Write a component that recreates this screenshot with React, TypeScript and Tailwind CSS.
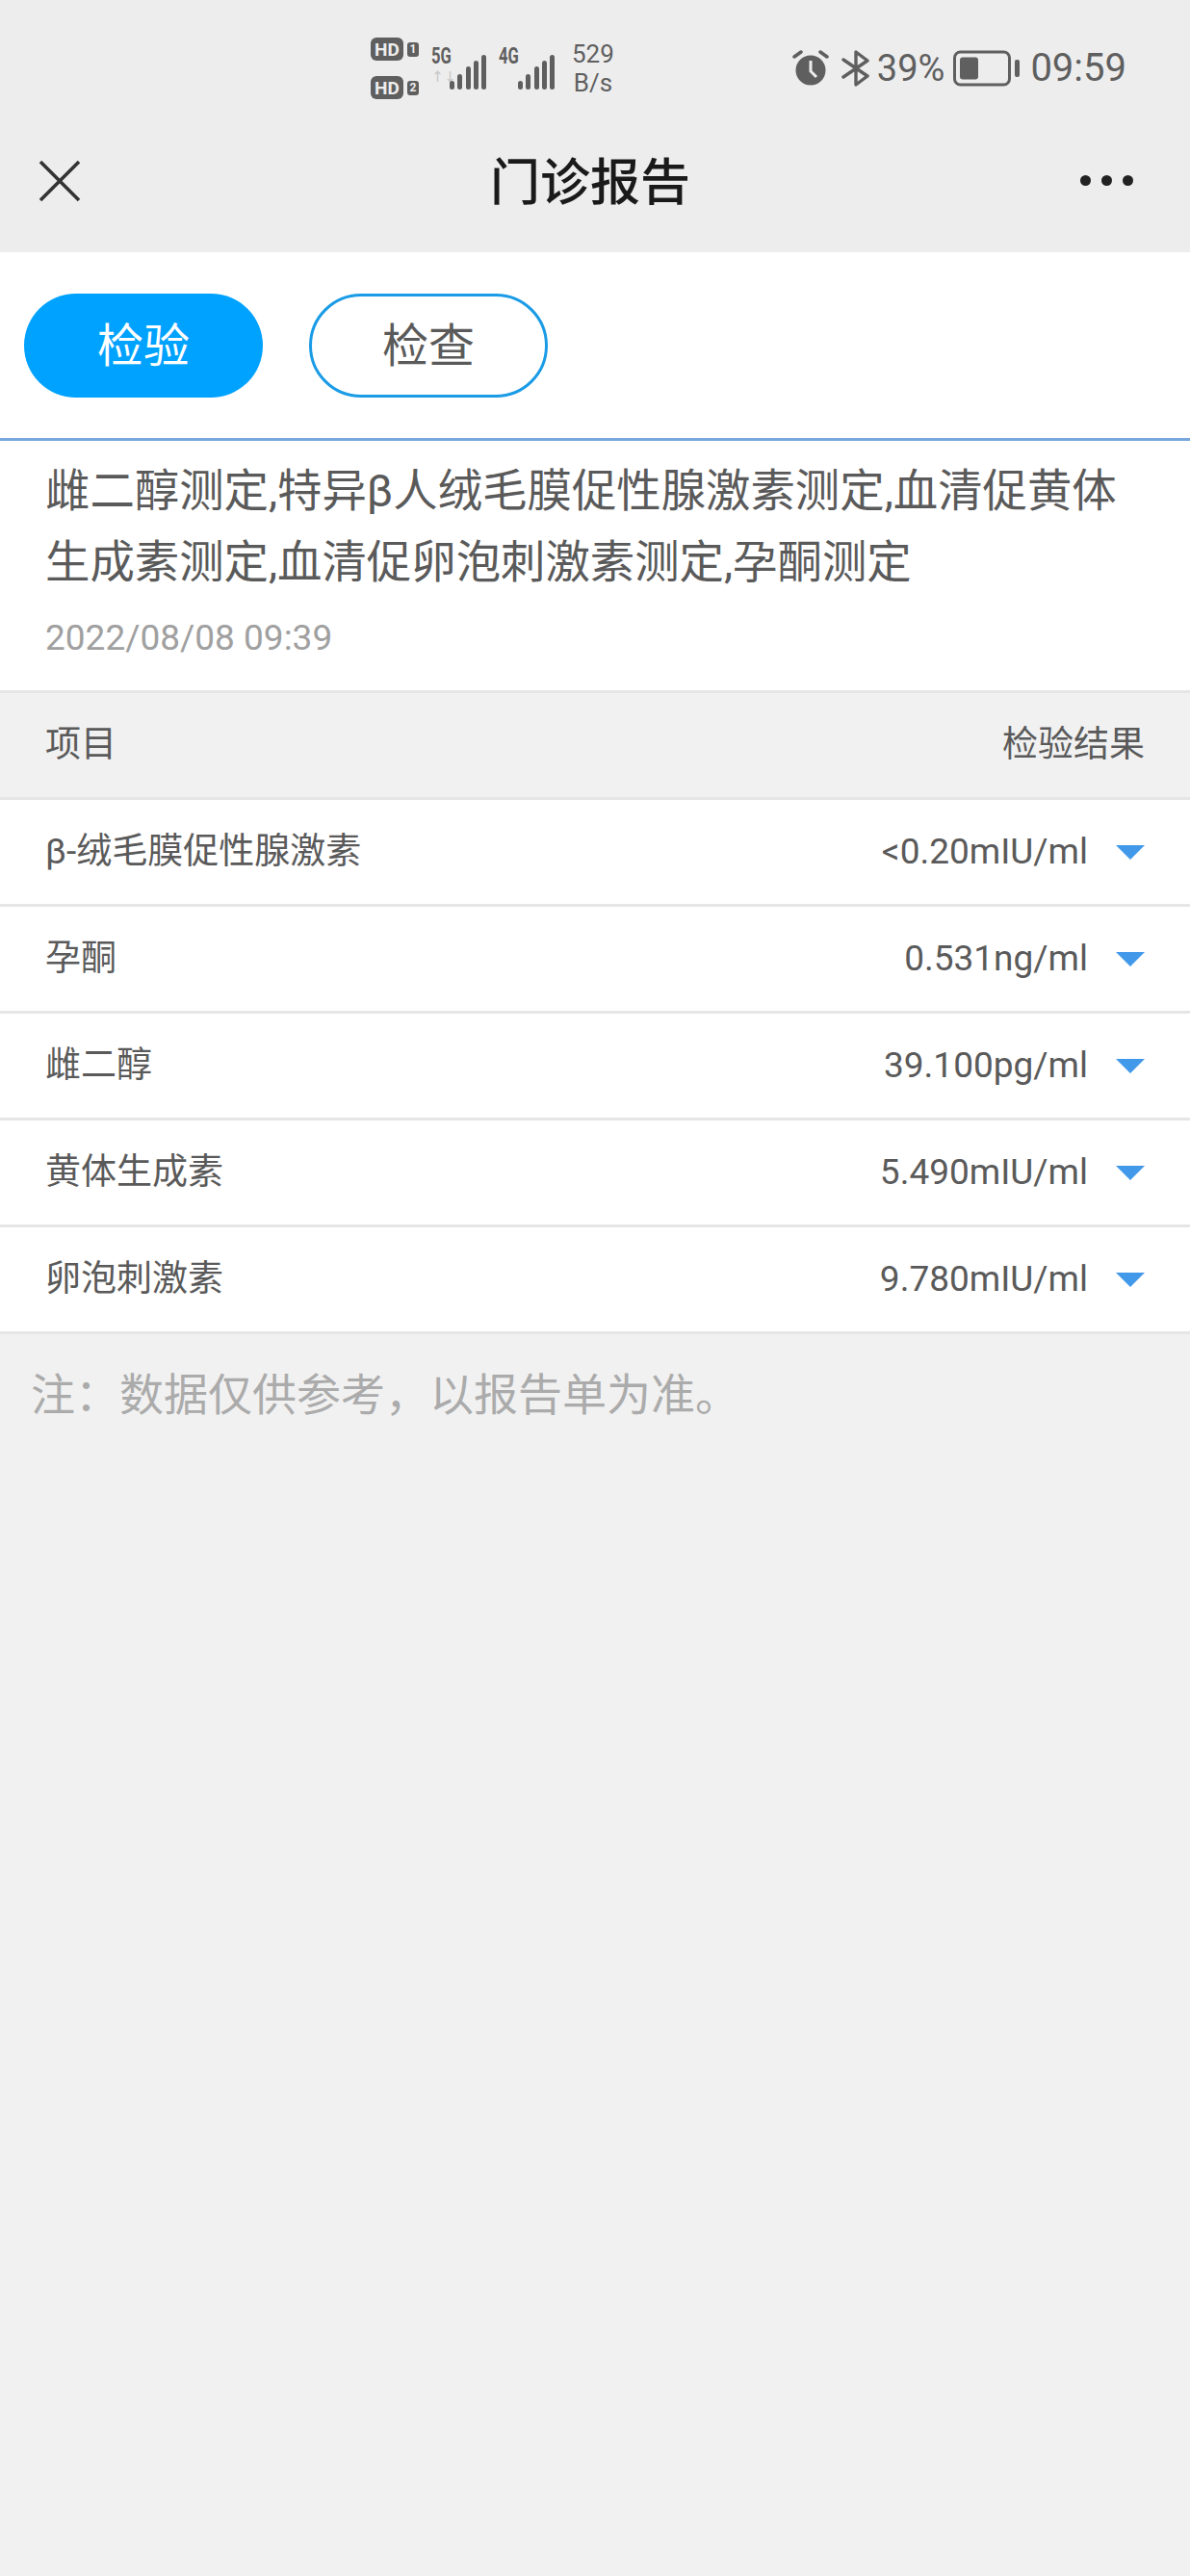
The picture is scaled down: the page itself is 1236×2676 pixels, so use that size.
function Bars() {
  return (
    <svg width="38" height="36" viewBox="0 0 38 36" fill="#5f5f5f">
      <rect x="0" y="27" width="5" height="9" rx="2.5" />
      <rect x="8" y="20" width="5" height="16" rx="2.5" />
      <rect x="17" y="12" width="5" height="24" rx="2.5" />
      <rect x="25" y="6" width="5" height="30" rx="2.5" />
      <rect x="33" y="0" width="5" height="36" rx="2.5" />
    </svg>
  );
}

function HD({ n }: { n: string }) {
  return (
    <div className="flex h-[24px] items-center gap-[4px]">
      <span className="flex h-[24px] w-[34px] items-center justify-center rounded-[6px] bg-[#5f5f5f] text-[19px] font-bold leading-none text-[#ededed]">HD</span>
      <span className="flex h-[15px] w-[12px] items-center justify-center rounded-[3px] bg-[#5f5f5f] text-[12px] font-bold leading-none text-[#ededed]">{n}</span>
    </div>
  );
}

const rows = [
  ["β-绒毛膜促性腺激素", "<0.20mIU/ml"],
  ["孕酮", "0.531ng/ml"],
  ["雌二醇", "39.100pg/ml"],
  ["黄体生成素", "5.490mIU/ml"],
  ["卵泡刺激素", "9.780mIU/ml"],
];

export default function App() {
  return (
    <div className='min-h-[2676px] w-[1236px] bg-[#f1f1f1] [font-family:Roboto,"Noto_Sans_CJK_SC",sans-serif] text-[#5a5a5a]'>
      <div className="h-[262px] bg-[#ededed]">
        <div className="flex h-[130px] items-start pl-[385px] pr-[66px] pt-[39px]">
          <div className="flex flex-col gap-[16px]">
            <HD n="1" />
            <HD n="2" />
          </div>
          <div className="ml-[13px] mt-[10px] flex">
            <div className="relative h-[40px] w-[57px]">
              <span className="absolute left-0 top-[-2px] origin-left text-[23px] font-bold leading-[24px] text-[#5f5f5f] [transform:scaleX(0.72)]">5G</span>
              <span className="absolute left-0 top-[24px] text-[13px] font-bold leading-[14px] text-[#c8c8c8]">↑↓</span>
              <div className="absolute right-0 bottom-[-4px]"><Bars /></div>
            </div>
            <div className="relative ml-[13px] h-[40px] w-[58px]">
              <span className="absolute left-0 top-[-2px] origin-left text-[23px] font-bold leading-[24px] text-[#5f5f5f] [transform:scaleX(0.72)]">4G</span>
              <div className="absolute right-0 bottom-[-4px]"><Bars /></div>
            </div>
          </div>
          <div className="ml-[18px] mt-[2px] text-center text-[26px] leading-[30px] text-[#5f5f5f]">
            <div>529</div>
            <div>B/s</div>
          </div>
          <div className="ml-auto flex h-[64px] items-center text-[#5f5f5f]">
            <svg width="38" height="38" viewBox="0 0 38 38" className="mr-[13px]" fill="#5f5f5f">
              <circle cx="19" cy="21" r="15.5" />
              <path d="M19 11v11l6 6" stroke="#ededed" strokeWidth="3" fill="none" />
              <path d="M2 7 9 2M36 7l-7-5" stroke="#5f5f5f" strokeWidth="3.5" strokeLinecap="round" fill="none" />
            </svg>
            <svg width="30" height="38" viewBox="0 0 30 38" className="mr-[7px]" fill="none" stroke="#5f5f5f" strokeWidth="3.4" strokeLinejoin="round" strokeLinecap="round">
              <path d="M2 10 27 27 15 36V2l12 9L2 28" />
            </svg>
            <span className="text-[38px] leading-none">39%</span>
            <svg width="70" height="38" viewBox="0 0 70 38" className="ml-[9px]" fill="none">
              <rect x="1.5" y="2" width="57" height="34" rx="6" stroke="#5f5f5f" strokeWidth="3" />
              <rect x="7" y="7.5" width="19" height="23" rx="3" fill="#5f5f5f" />
              <rect x="64" y="10" width="5" height="18" rx="2" fill="#5f5f5f" />
            </svg>
            <span className="ml-[10px] text-[40px] leading-none">09:59</span>
          </div>
        </div>
        <div className="relative flex h-[132px] items-start justify-between pl-[38px] pr-[59px] pt-[38px]">
          <svg width="48" height="48" viewBox="0 0 48 48" className="mt-[-4px]" stroke="#333333" strokeWidth="3.6" fill="none">
            <path d="M4 4 44 44M44 4 4 44" />
          </svg>
          <h1 className="absolute left-[509px] top-[28px] text-[52px] font-medium leading-[66px] text-[#1a1a1a]">门诊报告</h1>
          <div className="mt-[14px] flex gap-[11px]">
            <span className="h-[11px] w-[11px] rounded-full bg-[#222222]" />
            <span className="h-[11px] w-[11px] rounded-full bg-[#222222]" />
            <span className="h-[11px] w-[11px] rounded-full bg-[#222222]" />
          </div>
        </div>
      </div>

      <div className="flex h-[196px] items-start gap-[48px] border-b-[3px] border-[#76a8dd] bg-white pl-[25px] pt-[43px]">
        <div className="flex h-[108px] w-[248px] items-center justify-center rounded-[54px] bg-[#00a2ff] pt-[2px] text-[48px] leading-[60px] text-white">检验</div>
        <div className="flex h-[108px] w-[248px] items-center justify-center rounded-[54px] border-[3px] border-[#1a9be6] pt-[2px] text-[48px] leading-[60px] text-[#5a5a5a]">检查</div>
      </div>

      <div className="h-[262px] border-b-[3px] border-[#e6e6e6] bg-white pl-[47px] pr-[40px] pt-[15px]">
        <p className="text-[46.4px] leading-[74px]">雌二醇测定,特异β人绒毛膜促性腺激素测定,血清促黄体生成素测定,血清促卵泡刺激素测定,孕酮测定</p>
        <p className="mt-[20px] text-[37px] leading-[44px] text-[#a0a0a0]">2022/08/08 09:39</p>
      </div>

      <div className="flex h-[111px] items-center justify-between border-b-[3px] border-[#e6e6e6] bg-[#f1f1f1] px-[47px] text-[37px]">
        <span>项目</span>
        <span>检验结果</span>
      </div>

      {rows.map(([name, value]) => (
        <div key={name} className="flex h-[111px] items-center border-b-[3px] border-[#e6e6e6] bg-white px-[47px] text-[37px]">
          <span>{name}</span>
          <span className="ml-auto">{value}</span>
          <span className="ml-[29px] h-0 w-0 border-x-[15px] border-t-[15px] border-x-transparent border-t-[#4299e9]" />
        </div>
      ))}

      <p className="pl-[32px] pt-[33px] text-[46px] leading-[60px] text-[#ababab]">注：数据仅供参考，以报告单为准。</p>
    </div>
  );
}
